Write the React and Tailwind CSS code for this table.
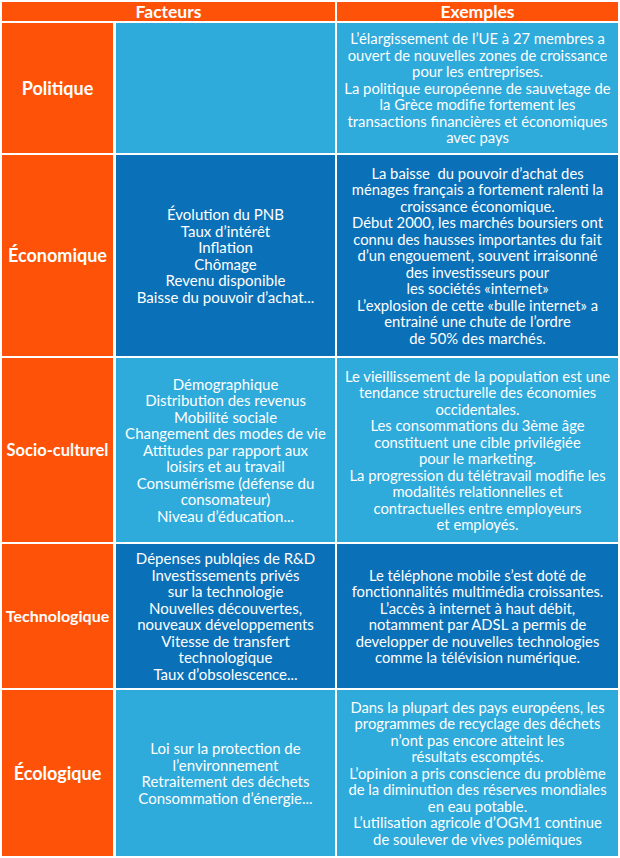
import React from "react";

const rows = [
  {
    label: "Politique",
    labelSize: "text-[18px]",
    height: "h-[130px]",
    tone: "light",
    factors: [],
    examples: [
      "L’élargissement de l’UE à 27 membres a",
      "ouvert de nouvelles zones de croissance",
      "pour les entreprises.",
      "La politique européenne de sauvetage de",
      "la Grèce modifie fortement les",
      "transactions financières et économiques",
      "avec pays",
    ],
  },
  {
    label: "Économique",
    labelSize: "text-[18px]",
    height: "h-[201px]",
    tone: "dark",
    factors: [
      "Évolution du PNB",
      "Taux d’intérêt",
      "Inflation",
      "Chômage",
      "Revenu disponible",
      "Baisse du pouvoir d’achat...",
    ],
    examples: [
      "La baisse  du pouvoir d’achat des",
      "ménages français a fortement ralenti la",
      "croissance économique.",
      "Début 2000, les marchés boursiers ont",
      "connu des hausses importantes du fait",
      "d’un engouement, souvent irraisonné",
      "des investisseurs pour",
      "les sociétés «internet»",
      "L’explosion de cette «bulle internet» a",
      "entrainé une chute de l’ordre",
      "de 50% des marchés.",
    ],
  },
  {
    label: "Socio-culturel",
    labelSize: "text-[16.5px]",
    height: "h-[184px]",
    tone: "light",
    factors: [
      "Démographique",
      "Distribution des revenus",
      "Mobilité sociale",
      "Changement des modes de vie",
      "Attitudes par rapport aux",
      "loisirs et au travail",
      "Consumérisme (défense du",
      "consomateur)",
      "Niveau d’éducation...",
    ],
    examples: [
      "Le vieillissement de la population est une",
      "tendance structurelle des économies",
      "occidentales.",
      "Les consommations du 3ème âge",
      "constituent une cible privilégiée",
      "pour le marketing.",
      "La progression du télétravail modifie les",
      "modalités relationnelles et",
      "contractuelles entre employeurs",
      "et employés.",
    ],
  },
  {
    label: "Technologique",
    labelSize: "text-[16px]",
    height: "h-[144px]",
    tone: "dark",
    factors: [
      "Dépenses publqies de R&D",
      "Investissements privés",
      "sur la technologie",
      "Nouvelles découvertes,",
      "nouveaux développements",
      "Vitesse de transfert",
      "technologique",
      "Taux d’obsolescence...",
    ],
    examples: [
      "Le téléphone mobile s’est doté de",
      "fonctionnalités multimédia croissantes.",
      "L’accès à internet à haut débit,",
      "notamment par ADSL a permis de",
      "developper de nouvelles technologies",
      "comme la télévision numérique.",
    ],
  },
  {
    label: "Écologique",
    labelSize: "text-[18px]",
    height: "h-[166px]",
    tone: "light",
    factors: [
      "Loi sur la protection de",
      "l’environnement",
      "Retraitement des déchets",
      "Consommation d’énergie...",
    ],
    examples: [
      "Dans la plupart des pays européens, les",
      "programmes de recyclage des déchets",
      "n’ont pas encore atteint les",
      "résultats escomptés.",
      "L’opinion a pris conscience du problème",
      "de la diminution des réserves mondiales",
      "en eau potable.",
      "L’utilisation agricole d’OGM1 continue",
      "de soulever de vives polémiques",
    ],
  },
];

const Lines = ({ lines, size }) => (
  <div className={`${size} leading-[16.5px] text-white text-center whitespace-pre`}>
    {lines.map((line, i) => (
      <div key={i}>{line}</div>
    ))}
  </div>
);

const App = () => {
  return (
    <div
      className="w-[620px] h-[858px] bg-white pt-[2px] pl-[2px]"
      style={{ fontFamily: "Lato, 'Open Sans', sans-serif" }}
    >
      <div className="grid grid-cols-[111px_220px_281px] gap-x-[2px] gap-y-[2px]">
        {/* header */}
        <div className="col-span-2 h-[19px] bg-[#fe5208] flex items-center justify-center text-white font-bold text-[17.5px] leading-[19px]">
          Facteurs
        </div>
        <div className="h-[19px] bg-[#fe5208] flex items-center justify-center text-white font-bold text-[17.5px] leading-[19px]">
          Exemples
        </div>

        {rows.map((row) => {
          const bg = row.tone === "dark" ? "bg-[#0a70b8]" : "bg-[#2eaadb]";
          return (
            <React.Fragment key={row.label}>
              <div
                className={`${row.height} ${row.labelSize} bg-[#fe5208] flex items-center justify-center text-white font-bold`}
              >
                {row.label}
              </div>
              <div className={`${row.height} ${bg} flex items-center justify-center ml-[1px]`}>
                <Lines lines={row.factors} size="text-[15px]" />
              </div>
              <div className={`${row.height} ${bg} flex items-center justify-center`}>
                <Lines lines={row.examples} size="text-[14.8px]" />
              </div>
            </React.Fragment>
          );
        })}
      </div>
    </div>
  );
};

export default App;
